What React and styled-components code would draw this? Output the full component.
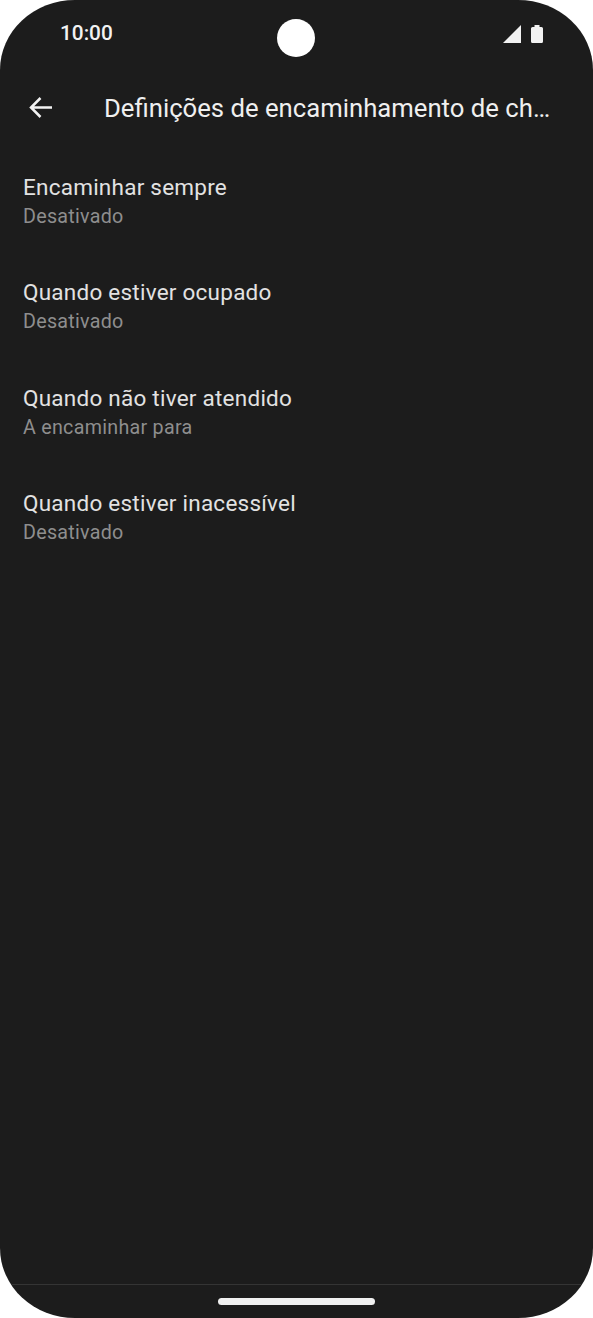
import React from 'react'
import styled, { createGlobalStyle } from 'styled-components'

const Global = createGlobalStyle`
html, body {
  margin: 0;
  padding: 0;
  background: #fff;
}
* {
  box-sizing: border-box;
}
`

const Screen = styled.div`
width: 593px;
height: 1318px;
background: #1c1c1c;
border-radius: 75px / 70px;
overflow: hidden;
display: flex;
flex-direction: column;
font-family: Roboto, sans-serif;
`

const StatusBar = styled.div`
height: 76px;
padding: 0 50px 0 60px;
display: flex;
align-items: flex-start;
`

const StatusSide = styled.div`
flex: 1;
display: flex;
justify-content: ${({ $end }) => $end ? 'flex-end' : 'flex-start'};
`

const Time = styled.span`
margin-top: 21px;
font-size: 20.8px;
line-height: 24px;
font-weight: 500;
color: #f2f2f2;
`

const Camera = styled.div`
width: 38px;
height: 38px;
margin: 19px 11px 0 0;
border-radius: 50%;
background: #fff;
`

const StatusIcons = styled.div`
display: flex;
align-items: flex-end;
gap: 10px;
margin-top: 25px;
`

const AppBar = styled.div`
height: 62px;
padding: 1px 37px 0 26px;
display: flex;
align-items: center;
gap: 49px;
`

const BackButton = styled.button`
width: 29px;
height: 29px;
padding: 0;
flex-shrink: 0;
border: 0;
background: transparent;
`

const Title = styled.h1`
margin: 0;
font-size: 25.7px;
line-height: 34px;
font-weight: 400;
color: #efefef;
white-space: nowrap;
overflow: hidden;
text-overflow: ellipsis;
`

const List = styled.div`
flex: 1;
padding-top: 19px;
display: flex;
flex-direction: column;
`

const Item = styled.div`
height: 105.4px;
padding: 15px 23px 0;
`

const ItemTitle = styled.div`
font-size: 22.5px;
line-height: 30px;
letter-spacing: 0.24px;
color: #e2e2e2;
`

const ItemSummary = styled.div`
font-size: 19.7px;
line-height: 30.6px;
letter-spacing: 0.27px;
color: #8e8e8e;
`

const NavBar = styled.div`
height: 35px;
border-top: 1px solid #343434;
display: flex;
justify-content: center;
padding-top: 13px;
margin: 0 12px -1px;
`

const HomeHandle = styled.div`
width: 157px;
height: 7px;
border-radius: 4px;
background: #f0f0f0;
`

const items = [
  { title: 'Encaminhar sempre', summary: 'Desativado' },
  { title: 'Quando estiver ocupado', summary: 'Desativado' },
  { title: 'Quando não tiver atendido', summary: 'A encaminhar para' },
  { title: 'Quando estiver inacessível', summary: 'Desativado' },
]

function App() {
  return (
    <Screen>
      <Global />
      <StatusBar>
        <StatusSide>
          <Time>10:00</Time>
        </StatusSide>
        <Camera />
        <StatusSide $end>
          <StatusIcons>
            <svg width="18" height="18" viewBox="0 0 18 18">
              <path d="M18 0V18H0Z" fill="#f2f2f2" />
            </svg>
            <svg width="12" height="18" viewBox="0 0 12 18">
              <path d="M3.5 0H8.5V2H10.5Q12 2 12 3.5V16.5Q12 18 10.5 18H1.5Q0 18 0 16.5V3.5Q0 2 1.5 2H3.5Z" fill="#f2f2f2" />
            </svg>
          </StatusIcons>
        </StatusSide>
      </StatusBar>
      <AppBar>
        <BackButton aria-label="Voltar">
          <svg width="29" height="29" viewBox="0 0 29 29" fill="none" stroke="#f2f2f2" strokeWidth="2.5">
            <path d="M26 14.5H5M14.5 5L5 14.5L14.5 24" />
          </svg>
        </BackButton>
        <Title>Definições de encaminhamento de chamadas</Title>
      </AppBar>
      <List>
        {items.map((item) => (
          <Item key={item.title}>
            <ItemTitle>{item.title}</ItemTitle>
            <ItemSummary>{item.summary}</ItemSummary>
          </Item>
        ))}
      </List>
      <NavBar>
        <HomeHandle />
      </NavBar>
    </Screen>
  )
}

export default App
